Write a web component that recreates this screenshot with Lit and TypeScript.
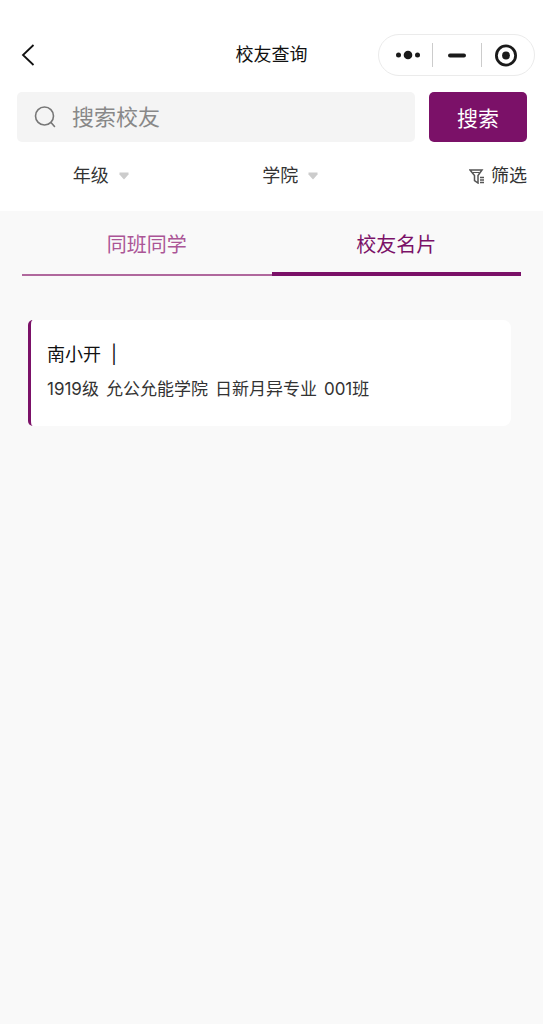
import { LitElement, html, css, svg, nothing } from 'lit';
import { customElement, property, state } from 'lit/decorators.js';
import { classMap } from 'lit/directives/class-map.js';

interface Alumnus {
  name: string;
  details: string[];
}

const backIcon = svg`<svg width="14" height="22" viewBox="0 0 14 22" fill="none" stroke="#111" stroke-width="1.8">
  <path d="M12.5 1 L2 11 L12.5 21" />
</svg>`;

const moreIcon = svg`<svg width="26" height="22" viewBox="0 0 26 22" fill="#1a1a1a">
  <circle cx="3.5" cy="11" r="2.5" />
  <circle cx="13" cy="11" r="4.3" />
  <circle cx="22.5" cy="11" r="2.5" />
</svg>`;

const minimizeIcon = svg`<svg width="20" height="22" viewBox="0 0 20 22" stroke="#1a1a1a" stroke-width="4" stroke-linecap="round">
  <path d="M3 11.5 H17" />
</svg>`;

const closeIcon = svg`<svg width="24" height="24" viewBox="0 0 24 24">
  <circle cx="12" cy="12.5" r="9.6" fill="none" stroke="#1a1a1a" stroke-width="2.8" />
  <circle cx="12" cy="12.5" r="3.9" fill="#1a1a1a" />
</svg>`;

const searchIcon = svg`<svg width="22" height="22" viewBox="0 0 22 22" fill="none" stroke="#777" stroke-width="1.6" stroke-linecap="round">
  <circle cx="10.5" cy="10" r="9" />
  <path d="M17 16.5 L20.5 20.5" />
</svg>`;

const arrowIcon = svg`<svg width="10" height="8" viewBox="0 0 10 8" fill="#ccc">
  <path d="M0.5 0.5 H9.5 L9.5 2.5 L5 7.5 L0.5 2.5 Z" />
</svg>`;

const funnelIcon = svg`<svg width="16" height="16" viewBox="0 0 16 16" fill="none" stroke="#555" stroke-width="1.5">
  <path d="M1 2 H13 L9 7.5 V15 L5.5 12.5 V7.5 Z" />
  <path d="M3.5 4.5 H10.5" stroke-width="1" />
  <path d="M11 9.5 H15 M11 12 H15 M11 14.5 H15" />
</svg>`;

@customElement('alumni-card')
class AlumniCard extends LitElement {
  @property({ attribute: false }) person!: Alumnus;

  static styles = css`
    :host {
      display: block;
      box-sizing: border-box;
      padding: 21px 16px 23px;
      border-left: 3px solid #7b1168;
      border-radius: 5px 8px 8px 5px;
      background: #fff;
    }

    h2 {
      display: flex;
      align-items: center;
      gap: 10px;
      margin: 0;
      font-size: 18px;
      font-weight: 400;
      line-height: 28px;
      color: #111;
    }

    .details {
      display: flex;
      flex-wrap: wrap;
      gap: 0 7px;
      margin: 6px 0 0;
      font-size: 17px;
      line-height: 28px;
      color: #333;
    }
  `;

  render() {
    return html`
      <h2><span>${this.person.name}</span><span>|</span></h2>
      <p class="details">
        ${this.person.details.map((item) => html`<span>${item}</span>`)}
      </p>
    `;
  }
}

@customElement('app-root')
class AppRoot extends LitElement {
  @state() private tab = 1;

  private tabs = ['同班同学', '校友名片'];

  private people: Alumnus[] = [
    { name: '南小开', details: ['1919级', '允公允能学院', '日新月异专业', '001班'] },
  ];

  static styles = css`
    :host {
      display: flex;
      flex-direction: column;
      min-height: 100vh;
      background: #f9f9f9;
      font-family: Inter, 'Noto Sans CJK SC', sans-serif;
      color: #333;
    }

    button,
    input,
    select {
      margin: 0;
      padding: 0;
      border: 0;
      background: none;
      color: inherit;
      font: inherit;
    }

    button {
      cursor: pointer;
    }

    svg {
      display: block;
      flex: none;
    }

    .top {
      background: #fff;
    }

    .navbar {
      display: grid;
      grid-template-columns: 1fr auto 1fr;
      align-items: center;
      padding: 34px 8px 16px;
    }

    .back {
      justify-self: start;
      padding: 10px 13px;
    }

    h1 {
      margin: 0;
      font-size: 18px;
      font-weight: 400;
      line-height: 28px;
      color: #111;
    }

    .capsule {
      justify-self: end;
      display: flex;
      padding: 8px 4px;
      border: 1px solid #ebebeb;
      border-radius: 21px;
    }

    .capsule button {
      display: flex;
      align-items: center;
      justify-content: center;
      box-sizing: border-box;
      width: 49px;
      height: 24px;
    }

    .capsule button + button {
      border-left: 1px solid #ccc;
    }

    .search {
      display: flex;
      gap: 14px;
      padding: 0 16px 0 17px;
    }

    .field {
      display: flex;
      flex: 1;
      align-items: center;
      gap: 16px;
      min-width: 0;
      height: 50px;
      padding: 0 17px;
      box-sizing: border-box;
      border-radius: 5px;
      background: #f4f4f4;
    }

    .field input {
      flex: 1;
      min-width: 0;
      outline: none;
      font-size: 22px;
      line-height: 32px;
    }

    .field input::placeholder {
      color: #888;
      opacity: 1;
    }

    .submit {
      padding: 0 28px;
      border-radius: 5px;
      background: #7b1168;
      color: #fff;
      font-size: 21px;
    }

    .filters {
      display: grid;
      grid-template-columns: 4fr 4fr 3fr;
      padding: 20px 16px 21px 6px;
      font-size: 18px;
      line-height: 28px;
    }

    .filter {
      display: flex;
      align-items: center;
      justify-content: center;
      gap: 10px;
    }

    .filter select {
      appearance: none;
      height: 28px;
      cursor: pointer;
    }

    .more {
      display: flex;
      align-items: center;
      justify-self: end;
      gap: 6px;
    }

    .tabs {
      display: flex;
      margin: 0 22px;
    }

    .tab {
      flex: 1;
      height: 65px;
      box-shadow: inset 0 -2px #b0689d;
      color: #ab5596;
      font-size: 20px;
    }

    .tab.active {
      box-shadow: inset 0 -4px #7b1168;
      color: #7b1168;
    }

    .list {
      display: grid;
      gap: 16px;
      padding: 44px 32px 44px 28px;
    }
  `;

  render() {
    return html`
      <div class="top">
        <header class="navbar">
          <button class="back" aria-label="返回">${backIcon}</button>
          <h1>校友查询</h1>
          <div class="capsule">
            <button aria-label="更多">${moreIcon}</button>
            <button aria-label="最小化">${minimizeIcon}</button>
            <button aria-label="关闭">${closeIcon}</button>
          </div>
        </header>
        <form class="search" @submit=${(e: Event) => e.preventDefault()}>
          <label class="field">
            ${searchIcon}
            <input type="text" placeholder="搜索校友" aria-label="搜索校友">
          </label>
          <button class="submit">搜索</button>
        </form>
        <div class="filters">
          ${['年级', '学院'].map((name) => html`
            <label class="filter">
              <select aria-label=${name}><option>${name}</option></select>
              ${arrowIcon}
            </label>
          `)}
          <button class="more">${funnelIcon}<span>筛选</span></button>
        </div>
      </div>
      <div class="tabs" role="tablist">
        ${this.tabs.map((name, i) => html`
          <button
            role="tab"
            class=${classMap({ tab: true, active: i === this.tab })}
            aria-selected=${i === this.tab}
            @click=${() => { this.tab = i; }}
          >${name}</button>
        `)}
      </div>
      <main class="list">
        ${this.tab === 1
          ? this.people.map((person) => html`<alumni-card .person=${person}></alumni-card>`)
          : nothing}
      </main>
    `;
  }
}
